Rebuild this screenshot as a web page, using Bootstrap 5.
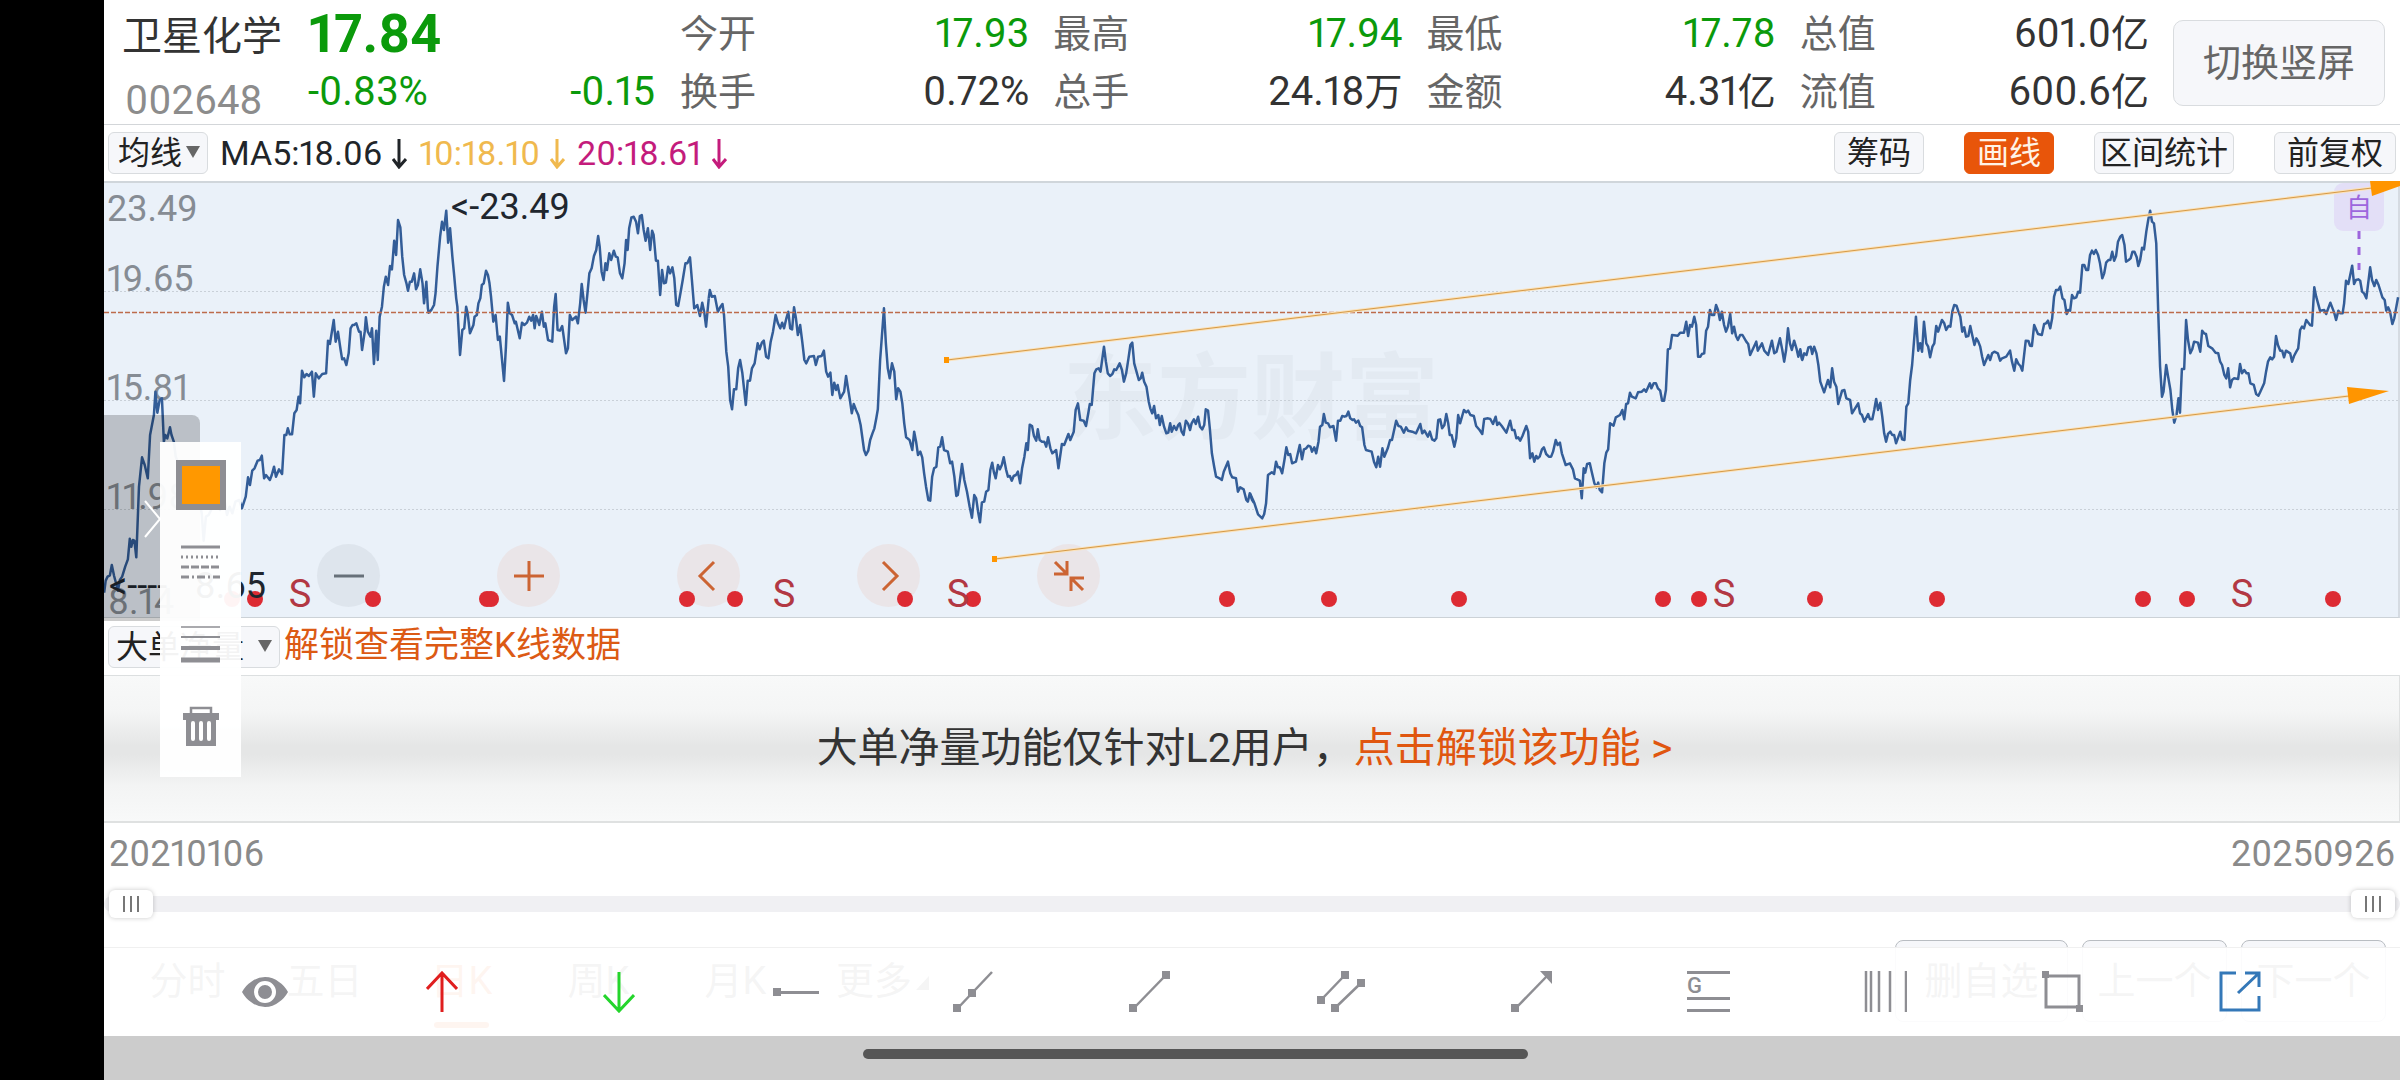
<!DOCTYPE html>
<html lang="zh-CN">
<head>
<meta charset="utf-8">
<meta name="viewport" content="width=device-width, initial-scale=1">
<title>卫星化学 002648</title>
<link href="https://cdn.jsdelivr.net/npm/bootstrap@5.3.0/dist/css/bootstrap.min.css" rel="stylesheet">
<style>
  body { font-family: Roboto, "Noto Sans CJK SC", sans-serif; font-variant-numeric: proportional-nums; color: #333; background: #fff; }
  .cutout { flex: 0 0 104px; background: #000; }
  .up-line { border-bottom: 1px solid #d3d6d9; }
  .quote { padding: 5px 15px 3px 18px; line-height: 58px; font-size: 38px; }
  .quote .idcol { flex: 0 0 186px; height: 116px; line-height: 64px; font-size: 40px; }
  .quote .idcol .code { color: #8c8c8c; padding-left: 3px; }
  .quote .pricecol { flex: 0 0 347px; }
  .quote .price { font-size: 54px; font-weight: 700; }
  .num { font-size: 40px; }
  .green { color: #0b9a0b; }
  .pair { display: flex; justify-content: space-between; }
  .lbl { color: #666; }
  .soft { background: #f6f7fa; border: 1px solid #d9dcdf; color: #222; }
  .rotate-btn { width: 212px; height: 86px; font-size: 38px; color: #666; border-radius: 10px; line-height: 1; padding: 0; }
  .mabar { height: 56px; font-size: 34px; padding: 0 4px; line-height: 42px; }
  .chip { font-size: 32px; line-height: 40px; height: 42px; padding: 0 12px; border-radius: 6px; }
  .chip.tight { padding: 0 5px; }
  .chip.hot { background: #e8550a; border-color: #e8550a; color: #fff3e6; }
  .tri { width: 0; height: 0; border: 7px solid transparent; border-top: 12px solid #666; border-bottom: 0; display: inline-block; vertical-align: 6px; margin-left: 4px; }
  .avg { margin-left: 12px; }
  .avg svg { margin-left: 10px; vertical-align: -4px; }
  .ma10 { color: #f0b94e; } .ma20 { color: #c41c7c; }
  .chart { position: relative; background: #eaf1f9; border-top: 2px solid #d0d6db; border-bottom: 1px solid #ccd2d7; border-right: 2px solid #d5dbe2; height: 437px; }
  .chart > svg { position: absolute; inset: 0; width: calc(100% + 2px); height: 434px; overflow: visible; pointer-events: none; }
  .zoomrow { position: absolute; left: 213px; top: 361px; gap: 117px; }
  .rnd { width: 63px; height: 63px; border-radius: 50%; border: 0; padding: 0; background: #eae5e8; color: #cc6433; display: flex; align-items: center; justify-content: center; }
  .rnd.off { background: #dee5ed; color: #677079; }
  .drawer { position: absolute; left: 0; top: 232px; width: 96px; height: 206px; border: 0; padding: 0; background: rgba(0,0,0,.2); border-radius: 0 8px 0 0; }
  .drawer svg { position: absolute; left: 39px; top: 85px; }
  .palette { position: absolute; left: 56px; top: 259px; width: 81px; background: rgba(255,255,255,.95); z-index: 5; padding: 18px 0 10px; display: flex; flex-direction: column; align-items: center; }
  .palette button { border: 0; background: none; padding: 0; width: 81px; height: 82px; color: #8e8e93; }
  .palette .swatch { width: 50px; height: 50px; background: #ff9800; border: 6px solid #8e8e93; margin-bottom: 11px; }
  .subbar { height: 57px; padding: 0 4px; }
  .subbar .chip { padding: 0 7px; }
  .subbar .tri { margin-left: 14px; }
  .unlock { color: #dc5a14; font-size: 35px; text-decoration: none; }
  .locked { height: 148px; padding-right: 14px; font-size: 41px; border-top: 1px solid #dcdfe0; border-bottom: 2px solid #dfe1e1; border-right: 1px solid #dfe1e1; background: linear-gradient(#f8f9f9 0%, #f4f5f5 25%, #e5e6e6 48%, #e5e6e6 54%, #f3f4f4 76%, #f8f9f9 100%); }
  .locked a { color: #e0560f; text-decoration: none; }
  .dates { font-size: 36px; line-height: 40px; color: #8a8a8a; padding: 11px 5px 0; }
  .rangebox { position: relative; height: 28px; margin-top: 16px; }
  .rangebox::before { content: ""; position: absolute; left: 0; right: 0; top: 6px; height: 16px; border-radius: 8px; background: #f0f0f3; }
  .rangebox input { position: absolute; left: 5px; width: calc(100% - 10px); top: 0; height: 28px; margin: 0; background: none; appearance: none; -webkit-appearance: none; pointer-events: none; }
  .rangebox input::-webkit-slider-thumb { -webkit-appearance: none; pointer-events: auto; width: 44px; height: 28px; border-radius: 6px; box-shadow: 0 0 5px rgba(0,0,0,.22);
    background: linear-gradient(#777,#777) 14px 6px/2px 16px no-repeat, linear-gradient(#777,#777) 21px 6px/2px 16px no-repeat, linear-gradient(#777,#777) 28px 6px/2px 16px no-repeat, #fff; }
  .foot { position: relative; height: 118px; padding: 22px 14px 0 15px; font-size: 38px; }
  .foot .tab { width: 137px; height: 82px; border: 0; background: none; padding: 0; color: #555; }
  .foot .tab.more { padding-left: 20px; }
  .foot .tab.on { color: #e8550a; position: relative; }
  .foot .tab.on::after { content: ""; position: absolute; left: 41px; bottom: -6px; width: 55px; height: 6px; border-radius: 3px; background: #e8550a; }
  .foot .act { height: 82px; width: 145px; padding: 0; font-size: 38px; border-radius: 8px; color: #555; border-color: #b9bdc2; }
  .foot .act.wide { width: 173px; }
  .tools { position: absolute; left: 0; right: 0; bottom: 0; height: 89px; padding: 0 72px; background: rgba(255,255,255,.94); border-top: 1px solid #f0f0f0; }
  .tools button { flex: 177 1 0; border: 0; background: none; padding: 0; color: #8e8e93; }
  .tools button.par { flex-grow: 205; }
  .tools svg, .palette svg { display: block; margin: 0 auto; }
  .sysbar { height: 44px; background: #ccc; padding-top: 13px; }
  .homebar { width: 29%; height: 10px; border-radius: 5px; background: #565656; margin-right: 113px; }
</style>
</head>
<body>
<div class="d-flex">
  <div class="cutout"></div>
  <main class="flex-grow-1 overflow-hidden">
    <header class="quote up-line d-flex align-items-start">
      <div class="idcol text-nowrap"><div>卫星化学</div><div class="code">002648</div></div>
      <div class="pricecol green"><div class="price">17.84</div><div class="pair num"><span>-0.83%</span><span>-0.15</span></div></div>
      <div class="d-flex flex-grow-1" style="gap:24px;margin:0 24px 0 25px">
        <div class="flex-fill w-100"><div class="pair"><span class="lbl">今开</span><span class="num green">17.93</span></div><div class="pair"><span class="lbl">换手</span><span class="num">0.72%</span></div></div>
        <div class="flex-fill w-100"><div class="pair"><span class="lbl">最高</span><span class="num green">17.94</span></div><div class="pair"><span class="lbl">总手</span><span><span class="num">24.18</span>万</span></div></div>
        <div class="flex-fill w-100"><div class="pair"><span class="lbl">最低</span><span class="num green">17.78</span></div><div class="pair"><span class="lbl">金额</span><span><span class="num">4.31</span>亿</span></div></div>
        <div class="flex-fill w-100"><div class="pair"><span class="lbl">总值</span><span><span class="num">601.0</span>亿</span></div><div class="pair"><span class="lbl">流值</span><span><span class="num">600.6</span>亿</span></div></div>
      </div>
      <button class="rotate-btn soft align-self-center">切换竖屏</button>
    </header>

    <div class="mabar d-flex align-items-center text-nowrap">
      <button class="chip soft" style="padding:0 7px 0 9px">均线<span class="tri"></span></button>
      <span class="avg text-dark">MA5:18.06<svg width="15" height="30" fill="none" stroke="currentColor" stroke-width="3"><path d="M7 0V28M1 20 7 28 14 20"/></svg></span>
      <span class="avg ma10">10:18.10<svg width="15" height="30" fill="none" stroke="currentColor" stroke-width="3"><path d="M7 0V28M1 20 7 28 14 20"/></svg></span>
      <span class="avg ma20">20:18.61<svg width="15" height="30" fill="none" stroke="currentColor" stroke-width="3"><path d="M7 0V28M1 20 7 28 14 20"/></svg></span>
      <div class="ms-auto d-flex" style="gap:40px">
        <button class="chip soft">筹码</button>
        <button class="chip soft hot">画线</button>
        <button class="chip soft tight">区间统计</button>
        <button class="chip soft">前复权</button>
      </div>
    </div>

    <section class="chart">
      <div class="zoomrow d-flex">
        <button class="rnd off" aria-label="缩小"><svg width="32" height="32" stroke="currentColor" stroke-width="3"><path d="M1 16H31"/></svg></button>
        <button class="rnd" aria-label="放大"><svg width="32" height="32" stroke="currentColor" stroke-width="3"><path d="M1 16H31M16 1V31"/></svg></button>
        <button class="rnd" aria-label="左移"><svg width="32" height="32" fill="none" stroke="currentColor" stroke-width="3"><path d="M21 2 7 16 21 30"/></svg></button>
        <button class="rnd" aria-label="右移"><svg width="32" height="32" fill="none" stroke="currentColor" stroke-width="3"><path d="M10 2 24 16 10 30"/></svg></button>
        <button class="rnd" aria-label="收起"><svg width="32" height="32" fill="none" stroke="currentColor" stroke-width="3"><path d="M2 2 14 14M14 1V14H1M30 30 18 18M18 31V18H31"/></svg></button>
      </div>
      <svg viewBox="104 183 2296 434" preserveAspectRatio="none" font-family="Roboto, 'Noto Sans CJK SC', sans-serif">
        <text x="1063" y="432" font-size="94" font-weight="700" fill="#e3eaf2">东方财富</text>
        <g stroke="#c9d0d8" stroke-width="1" stroke-dasharray="2 2"><path d="M104 291.500H2398M104 400.500H2398M104 509.500H2398"/></g>
        <g fill="#868c94" font-size="36">
          <text x="107" y="221">23.49</text><text x="107" y="291">19.65</text><text x="107" y="400">15.81</text><text x="107" y="509">11.98</text><text x="108" y="614">8.14</text>
        </g>
        <g fill="none" stroke="#335d98" stroke-width="2.500" stroke-linejoin="round">
          <g transform="translate(90 300) scale(.38265 .33333)">
            <polyline vector-effect="non-scaling-stroke" points="37,878 41,842 46,830 52,826 57,795 63,828 70,858 73,872 78,840 84,830 92,800 99,778 104,716 108,740 112,720 116,722 121,772 128,560 136,472 143,495 151,535 157,405 167,345 171,275 176,338 182,300 188,295 193,425 197,405 202,415 209,382 213,405 219,425 224,470 229,485 240,540 262,590 280,570 292,640 297,722 303,650 310,645 325,610 340,630 350,590 358,645 365,620 372,640 380,605 390,600 397,625 407,590 413,532 418,555 424,512 430,505 438,482 444,480 449,467 455,535 460,525 470,540 475,525 481,500 486,530 494,508 502,522 508,405 513,405 517,385 522,403 528,403 534,340 540,330 545,290 549,310 554,212 560,232 566,222 572,228 580,215 585,290 590,220 598,235 607,222 617,220 622,122 627,132 637,60 642,125 648,95 655,150 659,178 664,175 670,195 676,160 681,85 686,75 690,75 696,70 703,95 707,95 711,150 718,95 721,52 726,95 733,110 737,85 742,192 748,92 752,180 757,50 763,20 768,-40 773,-70 779,-45 784,-102 789,-92 795,-178 800,-135 805,-240 811,-218 816,-130 821,-75 827,-50 831,-28 836,-55 841,-55 847,-80 852,-32 857,-45 863,-92 869,-50 873,10 879,-55 883,25 885,38 892,30 899,15 903,-20 908,-100 915,-190 920,-235 925,-210 931,-268 936,-172 941,-215 947,-130 952,-70 957,-5 960,20 967,165 973,90 978,85 983,20 987,40 993,100 1002,75 1005,50 1011,45 1015,10 1020,-5 1024,-45 1029,-50 1035,-88 1040,-75 1044,-50 1048,-10 1054,65 1060,45 1066,120 1071,110 1082,243 1087,140 1092,8 1097,40 1103,45 1110,70 1113,65 1118,90 1123,115 1129,68 1135,75 1142,68 1148,50 1153,62 1158,45 1162,85 1166,48 1170,60 1174,75 1181,35 1186,80 1190,70 1197,120 1208,125 1213,20 1217,-18 1222,90 1228,92 1234,78 1244,160 1249,145 1254,45 1260,60 1270,50 1275,70 1281,10 1285,-48 1290,0 1295,38 1300,-20 1305,-80 1311,-95 1317,-132 1323,-150 1328,-192 1332,-160 1337,-85 1342,-60 1347,-110 1351,-90 1357,-140 1362,-120 1369,-148 1374,-130 1379,-128 1385,-80 1391,-65 1397,-110 1401,-180 1405,-150 1409,-215 1415,-248 1421,-250 1427,-235 1432,-200 1437,-252 1442,-255 1447,-210 1452,-178 1458,-215 1464,-150 1469,-208 1473,-195 1479,-118 1484,-118 1490,-15 1495,-90 1500,-50 1505,-52 1511,-100 1516,-80 1522,-98 1527,-65 1532,15 1537,18 1543,-20 1549,-60 1556,-110 1561,-110 1568,-128 1573,-60 1579,25 1587,15 1594,48 1600,8 1605,35 1610,80 1617,-5"/>
          </g>
          <g transform="translate(680 300) scale(.38265 .33333)">
            <polyline vector-effect="non-scaling-stroke" points="75,-5 78,-30 83,-10 91,-12 99,35 105,22 111,12 115,45 121,155 126,200 131,300 136,328 141,268 147,268 152,205 157,180 163,220 172,315 177,242 183,242 188,205 195,190 203,130 208,148 214,128 219,122 225,170 231,175 237,125 243,95 250,45 256,70 262,85 267,68 272,85 278,55 283,35 288,85 293,88 298,22 303,55 308,105 314,75 320,130 325,180 330,190 338,170 350,168 355,195 361,170 370,168 376,152 382,215 387,230 393,218 398,285 403,248 408,270 412,255 419,295 429,275 434,228 439,265 444,300 449,340 454,312 460,330 466,345 472,375 481,450 486,465 492,452 497,420 503,400 508,385 513,355 517,328 523,180 533,25 538,130 543,205 548,235 554,190 560,215 565,298 570,265 576,275 581,310 586,370 591,412 600,420 607,450 612,395 617,425 622,465 628,455 633,472 638,520 643,560 649,600 654,602 659,530 664,505 670,500 675,442 680,440 685,412 690,450 700,455 706,490 711,485 717,530 722,588 726,585 731,545 737,492 743,540 750,575 757,620 763,653 769,585 774,595 779,635 784,667 789,607 795,605 800,575 806,570 811,510 816,488 820,515 825,535 831,495 836,508 841,495 846,472 852,508 857,530 862,528 867,542 872,528 878,525 883,515 889,550 894,505 900,470 905,430 909,450 914,374 920,378 925,408 931,422 935,388 940,420 946,425 952,425 957,440 962,412 968,445 973,460 983,450 989,505 998,432 1004,435 1009,420 1015,402 1020,420 1029,395 1034,330 1040,310 1046,360 1055,362 1061,378 1067,340 1071,312 1076,315 1083,220 1088,208 1094,205 1099,215 1108,140 1113,185 1118,220 1124,228 1130,222 1135,208 1140,210 1149,190 1155,210 1160,245 1166,220 1172,175 1177,135 1182,128 1187,190 1193,215 1199,240 1204,235 1208,218 1213,245 1219,260 1225,305 1229,325 1234,340 1239,318 1244,355 1250,345 1254,375 1259,348 1265,380 1271,400 1276,398 1281,370 1285,395 1291,378 1297,390 1302,375 1306,370 1311,395 1316,405 1322,362 1328,372 1333,390 1337,370 1343,358 1348,372 1354,350 1359,380 1365,388 1370,375 1374,328 1380,332 1385,390 1390,460 1396,500 1401,530 1410,535 1416,540 1421,515 1432,485 1438,520 1443,532 1453,535 1458,575 1464,562 1473,568 1480,600 1484,605 1489,580 1495,600 1500,608"/>
          </g>
          <g transform="translate(1250 180) scale(.38265 .33333)">
            <polyline vector-effect="non-scaling-stroke" points="0,940 11,968 21,1003 32,1015 37,1003 42,970 47,885 57,877 63,882 68,845 73,862 78,862 84,880 90,840 95,802 100,825 105,822 110,850 120,845 130,795 136,838 141,808 147,805 152,797 158,800 162,815 168,802 173,820 179,785 183,740 189,735 193,702 198,728 204,730 209,742 218,738 225,782 230,722 236,722 241,708 247,710 252,708 257,695 262,715 268,720 272,718 277,728 283,722 288,738 293,742 299,795 303,810 318,815 324,845 330,862 335,830 340,860 346,805 351,830 360,805 366,780 371,780 382,722 388,738 394,740 402,758 408,742 413,752 424,755 434,760 445,732 450,760 456,752 465,770 470,755 476,778 482,782 487,775 492,720 497,718 502,745 508,735 513,702 518,730 522,765 527,765 534,800 539,775 544,705 549,730 559,690 565,697 570,692 576,705 585,708 591,738 600,750 607,762 612,717 622,715 628,717 635,732 642,710 646,735 651,728 658,738 670,758 675,740 680,722 685,750 691,750 696,775 701,772 706,782 712,768 722,738 727,755 732,835 738,820 743,845 748,828 752,835 757,830 763,808 768,802 774,822 781,830 787,830 792,815 799,780 804,795 810,788 815,820 825,855 836,850 844,868 849,895 862,902 867,955 872,865 876,878 881,852 888,850 893,875 900,910 905,922 910,908 914,930 920,937 926,850 931,818 936,808 941,730 950,737 956,712 967,705 973,690 978,718 983,672 988,670 993,638 998,650 1008,655 1014,637 1024,635 1030,628 1035,635 1045,610 1049,625 1055,610 1061,610 1066,625 1072,632 1077,662 1082,662 1087,630 1092,508 1098,505 1103,465 1118,467 1124,458 1134,458 1140,425 1145,468 1150,435 1155,440 1161,410 1166,435 1171,530 1177,530 1181,522 1187,520 1192,452 1197,440 1202,390 1207,405 1213,405 1218,375 1223,390 1228,420 1233,395 1239,435 1244,455 1249,440 1255,402 1260,460 1265,440 1270,468 1275,480 1281,465 1287,465 1297,485 1302,492 1307,525 1323,485 1327,512 1338,490 1344,512 1354,525 1364,482 1370,520 1376,515 1385,475 1391,510 1396,545 1401,510 1406,445 1411,490 1416,510 1422,482 1428,505 1433,530 1438,508 1443,540"/>
          </g>
          <g transform="translate(1800 180) scale(.38265 .33333)">
            <polyline vector-effect="non-scaling-stroke" points="0,510 6,540 11,520 17,525 22,502 28,500 32,522 37,500 43,520 48,555 53,605 63,637 73,600 79,622 84,565 89,605 95,620 100,672 110,632 116,630 121,655 131,660 136,700 152,670 157,700 162,705 168,725 178,702 183,718 189,718 194,690 199,657 204,690 210,668 215,710 220,760 225,785 230,762 236,755 241,765 246,765 251,790 262,755 267,778 273,780 278,680 283,670 288,600 293,555 303,410 309,512 314,490 319,515 324,425 330,490 335,500 340,532 346,500 351,490 356,438 361,455 371,420 377,430 382,450 388,438 393,440 398,395 403,375 409,377 414,395 419,410 424,455 429,442 434,470 440,468 445,438 450,465 456,495 461,475 466,485 471,500 476,530 481,555 492,525 497,540 502,520 508,515 517,520 523,542 528,535 539,530 549,512 554,545 560,572 565,538 571,552 576,558 581,572 590,482 597,483 601,497 606,498 612,435 622,462 632,465 638,432 643,430 648,422 654,445 659,415 664,350 669,330 675,330 680,320 686,355 691,360 697,402 701,390 706,392 711,345 716,355 722,352 727,335 732,338 738,255 743,255 748,270 753,270 758,225 763,212 768,222 773,210 779,225 784,250 790,295 795,280 800,248 806,240 811,240 816,215 821,242 826,228 831,185 837,170 842,165 848,195 852,245 859,240 864,235 869,215 874,215 880,232 884,258 889,240 894,203 899,208 905,155 910,120 915,92 920,125 925,130 931,190 936,390 941,560 946,650 950,635 957,555 962,590 968,630 973,690 978,728 984,705 989,655 993,698 998,567 1004,567 1009,420 1014,480 1020,520 1025,508 1030,485 1040,488 1046,515 1051,452 1056,460 1061,462 1067,498 1077,505 1086,518 1093,520 1098,545 1103,555 1109,585 1114,595 1119,565 1124,622 1129,600 1134,595 1145,597 1150,552 1155,580 1161,570 1167,580 1172,580 1177,610 1186,615 1192,642 1198,647 1203,635 1213,610 1218,575 1223,545 1229,532 1234,538 1239,530 1244,468 1249,495 1255,512 1260,512 1265,532 1270,512 1281,520 1286,545 1291,528 1297,515 1302,505 1307,450 1312,440 1317,445 1323,420 1333,435 1338,437 1344,322 1349,350 1359,392 1370,390 1375,402 1386,368 1396,398 1401,420 1407,392 1412,400 1418,400 1422,370 1427,302 1433,312 1443,257 1448,312 1453,300 1459,298 1464,302 1469,335 1474,340 1480,355 1490,262 1495,300 1501,318 1506,300 1512,315 1522,352 1528,360 1532,392 1537,382 1542,395 1548,432 1553,415 1563,352"/>
          </g>
        </g>
        <path d="M104 312.500H2398" stroke="#bd6b4b" stroke-width="1.500" stroke-dasharray="5 2"/>
        <rect x="2334" y="183" width="50" height="48" rx="9" fill="#e3dff7"/>
        <text x="2346" y="217" font-size="26" fill="#9d66dd">自</text>
        <path d="M2359 231V270" stroke="#9d66dd" stroke-width="3" stroke-dasharray="8 8"/>
        <g fill="none"><path d="M947 360 2372 188M995 559 2349 396" stroke="#fbe2ba" stroke-width="3"/><path d="M947 360 2372 188M995 559 2349 396" stroke="#d59a48" stroke-width="1"/></g>
        <path fill="#ff9500" d="M2370 181H2400V186L2372 196ZM2347 387 2389 391 2349 404ZM944 357h5v6h-5ZM992 556h5v6h-5Z"/>
        <g fill="#dd2b33">
          <circle cx="232" cy="599" r="8"/><circle cx="255" cy="599" r="8"/><circle cx="373" cy="599" r="8"/><circle cx="487" cy="599" r="8"/><circle cx="491" cy="599" r="8"/><circle cx="687" cy="599" r="8"/><circle cx="735" cy="599" r="8"/><circle cx="905" cy="599" r="8"/><circle cx="973" cy="599" r="8"/><circle cx="1227" cy="599" r="8"/><circle cx="1329" cy="599" r="8"/><circle cx="1459" cy="599" r="8"/><circle cx="1663" cy="599" r="8"/><circle cx="1699" cy="599" r="8"/><circle cx="1815" cy="599" r="8"/><circle cx="1937" cy="599" r="8"/><circle cx="2143" cy="599" r="8"/><circle cx="2187" cy="599" r="8"/><circle cx="2333" cy="599" r="8"/>
        </g>
        <g fill="#b23843" font-size="38" text-anchor="middle">
          <text x="300" y="607">S</text><text x="784" y="607">S</text><text x="958" y="607">S</text><text x="1724" y="607">S</text><text x="2242" y="607">S</text>
        </g>
        <g fill="#20262e" font-size="36"><text x="451" y="219">&lt;-23.49</text><text x="109" y="598">&lt;----</text><text x="266" y="598" text-anchor="end">8.65</text></g>
      </svg>
      <button class="drawer" aria-label="展开"><svg width="20" height="38" fill="none" stroke="#fff" stroke-width="2"><path d="M2 1 17 19 2 37"/></svg></button>
      <div class="palette">
        <button class="swatch" aria-label="颜色"></button>
        <button aria-label="线型"><svg width="39" height="34" stroke="currentColor" stroke-width="3"><path d="M0 2H39"/><path d="M0 12H39" stroke-dasharray="2 3"/><path d="M0 22H39" stroke-dasharray="8 2"/><path d="M0 32H39" stroke-dasharray="8 3 2 3"/></svg></button>
        <button aria-label="线宽"><svg width="39" height="38" stroke="currentColor"><path d="M0 2H39" stroke-width="1.500"/><path d="M0 12H39" stroke-width="2"/><path d="M0 23H39" stroke-width="4"/><path d="M0 35H39" stroke-width="5"/></svg></button>
        <button aria-label="删除"><svg width="38" height="41" fill="none" stroke="currentColor"><path d="M9 7V2H29V7" stroke-width="2.500"/><path d="M1 7H37V14H34V40H4V14H1Z" fill="currentColor" stroke="none"/><path d="M11 17V33M19 17V33M27 17V33" stroke="#fff" stroke-width="4" stroke-linecap="round"/></svg></button>
      </div>
    </section>

    <div class="subbar d-flex align-items-center text-nowrap">
      <button class="chip soft">大单净量<span class="tri"></span></button>
      <a href="#" class="unlock ms-1">解锁查看完整K线数据</a>
    </div>

    <div class="locked d-flex align-items-center justify-content-center text-nowrap">
      <span>大单净量功能仅针对L2用户，</span><a href="#">点击解锁该功能 &gt;</a>
    </div>

    <div class="dates d-flex justify-content-between"><span>20210106</span><span>20250926</span></div>
    <div class="rangebox">
      <input type="range" min="0" max="100" value="0" aria-label="起始日期">
      <input type="range" min="0" max="100" value="100" aria-label="结束日期">
    </div>

    <div class="foot d-flex align-items-start text-nowrap">
      <button class="tab">分时</button><button class="tab">五日</button><button class="tab on">日K</button><button class="tab">周K</button><button class="tab">月K</button><button class="tab more">更多<svg width="13" height="14" fill="currentColor" class="ms-1"><path d="M13 0V14H0Z"/></svg></button>
      <div class="ms-auto d-flex" style="gap:14px">
        <button class="act wide soft">删自选</button><button class="act soft">上一个</button><button class="act soft">下一个</button>
      </div>
      <div class="tools d-flex align-items-center">
        <button aria-label="显示"><svg width="46" height="30"><path fill="currentColor" d="M0 15Q4 8 9 5Q15 0 23 0T37 5Q42 8 46 15Q42 22 37 25Q31 30 23 30T9 25Q4 22 0 15Z"/><circle cx="23" cy="15" r="9" fill="currentColor" stroke="#fff" stroke-width="4"/></svg></button>
        <button aria-label="上箭头"><svg width="32" height="42" fill="none" stroke="#e01e1e" stroke-width="3"><path d="M16 41V2M1 18 16 2 31 18"/></svg></button>
        <button aria-label="下箭头"><svg width="32" height="42" fill="none" stroke="#24d52c" stroke-width="3"><path d="M16 1V40M1 24 16 40 31 24"/></svg></button>
        <button aria-label="水平线"><svg width="46" height="42"><path fill="currentColor" d="M0 17H8V25H0ZM8 20H46V23H8Z"/></svg></button>
        <button aria-label="射线"><svg width="40" height="42" stroke="currentColor" stroke-width="2.500"><path d="M4 38 39 1"/><path fill="currentColor" stroke="none" d="M0 33H8V41H0ZM15 18H23V26H15Z"/></svg></button>
        <button aria-label="线段"><svg width="41" height="42" stroke="currentColor" stroke-width="2.500"><path d="M4 38 37 4"/><path fill="currentColor" stroke="none" d="M0 33H8V41H0ZM33 0H41V8H33Z"/></svg></button>
        <button class="par" aria-label="平行线"><svg width="48" height="42" stroke="currentColor" stroke-width="2.500"><path d="M4 29 28 4M18 37 44 12"/><path fill="currentColor" stroke="none" d="M0 25H8V33H0ZM24 0H32V8H24ZM14 33H22V41H14ZM40 8H48V16H40Z"/></svg></button>
        <button aria-label="箭头线"><svg width="41" height="42" stroke="currentColor" stroke-width="2.500"><path d="M4 38 37 4"/><path fill="currentColor" stroke="none" d="M0 33H8V41H0ZM29 0H41V13Z"/></svg></button>
        <button aria-label="黄金分割"><svg width="43" height="42" fill="currentColor"><path d="M0 0H43V3H0ZM0 26H43V29H0ZM0 38H43V41H0Z"/><text x="0" y="22" font-size="22" font-weight="500" font-family="Roboto, sans-serif">G</text></svg></button>
        <button aria-label="周期线"><svg width="43" height="42" stroke="currentColor" stroke-width="2.500"><path d="M2 0V41M7 0V41M15 0V41M26 0V41M42 0V41"/></svg></button>
        <button aria-label="矩形"><svg width="41" height="42" fill="none" stroke="currentColor" stroke-width="3"><path d="M4 5H37V36H4Z"/><path fill="currentColor" stroke="none" d="M0 0H7V7H0ZM34 34H41V41H34Z"/></svg></button>
        <button aria-label="分享"><svg width="42" height="42" fill="none" stroke="#3478b8" stroke-width="3"><path d="M17 2H2V39H40V25M26 2H40V16M19 22 39 3"/></svg></button>
      </div>
    </div>
    <div class="sysbar d-flex justify-content-center"><div class="homebar"></div></div>
  </main>
</div>
<script src="https://cdn.jsdelivr.net/npm/bootstrap@5.3.0/dist/js/bootstrap.bundle.min.js"></script>
</body>
</html>
